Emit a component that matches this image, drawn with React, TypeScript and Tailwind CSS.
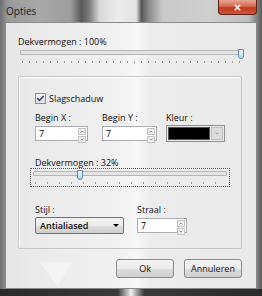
import { ChevronDown, ChevronUp, Check, X } from 'lucide-react';

const font = { fontFamily: '"Open Sans", "Liberation Sans", sans-serif' };

function Spin({ value, width }: { value: string; width: string }) {
  return (
    <div className={`${width} h-[15px] bg-white border border-[#abadb3] flex items-stretch`}>
      <span className="flex-1 pl-[3px] text-[9px] leading-[13px] text-black">{value}</span>
      <div className="w-[8px] flex flex-col gap-[1px] py-[1px] mr-[1px]">
        <div className="flex-1 border border-[#c3c3c3] bg-[#f2f2f2] flex items-center justify-center">
          <ChevronUp className="w-[6px] h-[5px] text-[#555]" strokeWidth={3} />
        </div>
        <div className="flex-1 border border-[#c3c3c3] bg-[#f2f2f2] flex items-center justify-center">
          <ChevronDown className="w-[6px] h-[5px] text-[#555]" strokeWidth={3} />
        </div>
      </div>
    </div>
  );
}

function Slider({ pos, tickGap, focus }: { pos: string; tickGap: string; focus?: boolean }) {
  return (
    <div className={`relative h-full ${focus ? 'border border-dotted border-[#555]' : ''}`}>
      <div className="absolute left-[2px] right-[2px] top-[2px] h-[5px] bg-[#e3e3e3] border border-[#b5b5b5] rounded-[1px]" />
      <div className={`absolute left-[4px] right-[4px] bottom-[2px] h-[2px] ${tickGap}`} />
      <div className={`absolute top-[1px] w-[6px] h-[10px] rounded-b-[3px] border border-[#6a8aa8] bg-[linear-gradient(to_bottom,#eaf6fd,#a9d8f2)] ${pos}`} />
    </div>
  );
}

const btn =
  'w-[58px] h-[19px] rounded-[3px] border border-[#8a8a8a] bg-[linear-gradient(to_bottom,#f2f2f2_0%,#ebebeb_50%,#dddddd_51%,#cfcfcf_100%)] flex items-center justify-center text-[9px] text-[#111]';

export default function App() {
  return (
    <div
      style={font}
      className="w-[262px] h-[296px] relative overflow-hidden flex flex-col bg-[linear-gradient(to_right,#6d6d6d_0%,#9a9a9a_3%,#a8a8a8_15%,#9c9c9c_27%,#5a5a5a_31%,#7a7a7a_34%,#d8d8d8_38%,#ececec_45%,#e2e2e2_52%,#585858_54%,#8c8c8c_57%,#c9c9c9_62%,#cfcfcf_80%,#bdbdbd_95%,#5a5a5a_100%)]"
    >
      {/* titelbalk */}
      <div className="h-[22px] flex items-start justify-between pl-[6px] pr-[5px]">
        <span className="mt-[4px] text-[10px] text-[#1a1a1a]">Opties</span>
        <div className="w-[39px] h-[15px] rounded-b-[4px] border border-[#5a2318] border-t-0 bg-[linear-gradient(to_bottom,#e8a493_0%,#d46a52_45%,#c0391f_55%,#d1543a_100%)] flex items-center justify-center">
          <X className="w-[9px] h-[9px] text-white" strokeWidth={4} />
        </div>
      </div>

      {/* venster inhoud */}
      <div className="mx-[5px] flex-1 border border-[#8a8a8a] bg-[linear-gradient(to_right,#e6e6e6_0%,#ececec_20%,#f1f1f1_46%,#f7f7f7_52%,#ececec_58%,#e9e9e9_100%)] flex flex-col pl-[12px] pr-[14px]">
        <div className="mt-[13px] text-[9px] leading-[11px] text-[#111]">Dekvermogen : 100%</div>
        <div className="mt-[1px] -mr-[2px] h-[17px]">
          <Slider pos="right-0" tickGap="bg-[repeating-linear-gradient(to_right,#9a9a9a_0,#9a9a9a_1px,transparent_1px,transparent_7px)]" />
        </div>

        {/* groepsvak */}
        <div className="mt-[11px] border border-[#c5c5c5] rounded-[2px] shadow-[inset_1px_1px_0_#fff] flex flex-col pl-[16px] pr-[10px] pb-[14px]">
          <div className="mt-[16px] flex items-center gap-[3px]">
            <div className="w-[11px] h-[11px] border border-[#8e8f8f] bg-[linear-gradient(to_bottom,#f4f4f4,#dedede)] flex items-center justify-center">
              <Check className="w-[9px] h-[9px] text-[#2f4a8a]" strokeWidth={4} />
            </div>
            <span className="text-[9px] leading-[11px] text-[#111]">Slagschaduw</span>
          </div>

          <div className="mt-[8px] flex gap-[14px]">
            <div className="flex flex-col gap-[3px]">
              <span className="text-[9px] leading-[11px] text-[#111]">Begin X :</span>
              <Spin value="7" width="w-[53px]" />
            </div>
            <div className="flex flex-col gap-[3px]">
              <span className="text-[9px] leading-[11px] text-[#111]">Begin Y :</span>
              <Spin value="7" width="w-[55px]" />
            </div>
            <div className="flex flex-col gap-[2px] -ml-[5px]">
              <span className="text-[9px] leading-[11px] text-[#111]">Kleur :</span>
              <div className="w-[59px] h-[17px] border border-[#8e8f8f] bg-[#e8e8e8] flex items-center p-[1px] gap-[1px]">
                <div className="flex-1 h-full bg-black border border-[#555]" />
                <div className="w-[12px] h-full flex items-center justify-center bg-[#dcdcdc] border border-[#c0c0c0]">
                  <ChevronDown className="w-[6px] h-[5px] text-[#666]" strokeWidth={3} />
                </div>
              </div>
            </div>
          </div>

          <span className="mt-[15px] text-[9px] leading-[11px] text-[#111]">Dekvermogen : 32%</span>
          <div className="mt-[0px] -ml-[5px] mr-[1px] h-[19px]">
            <Slider focus pos="left-[46px]" tickGap="bg-[repeating-linear-gradient(to_right,#9a9a9a_0,#9a9a9a_1px,transparent_1px,transparent_12px)]" />
          </div>

          <div className="mt-[17px] flex gap-[13px]">
            <div className="flex flex-col gap-[2px]">
              <span className="text-[9px] leading-[11px] text-[#111]">Stijl :</span>
              <div className="w-[89px] h-[17px] rounded-[2px] border border-[#707070] bg-[linear-gradient(to_bottom,#f2f2f2_0%,#ebebeb_50%,#dddddd_51%,#cfcfcf_100%)] flex items-center justify-between pl-[4px] pr-[4px]">
                <span className="text-[9px] font-semibold text-[#111]">Antialiased</span>
                <span className="w-0 h-0 border-l-[3px] border-r-[3px] border-t-[3px] border-l-transparent border-r-transparent border-t-black" />
              </div>
            </div>
            <div className="flex flex-col gap-[3px]">
              <span className="text-[9px] leading-[11px] text-[#111]">Straal :</span>
              <Spin value="7" width="w-[50px]" />
            </div>
          </div>
        </div>

        {/* knoppen */}
        <div className="mt-[10px] flex justify-end gap-[10px]">
          <div className={btn}>Ok</div>
          <div className={btn}>Annuleren</div>
        </div>
      </div>

      {/* glans reflectie */}
      <div className="absolute left-[40px] top-[262px] w-[32px] h-[24px] bg-white/40 [clip-path:polygon(0_0,100%_0,55%_100%)]" />

      {/* onderrand */}
      <div className="h-[7px] bg-[linear-gradient(to_right,#2a2a2a_0%,#3a3a3a_45%,#f0f0f0_50%,#3a3a3a_55%,#2a2a2a_100%)]" />
    </div>
  );
}
